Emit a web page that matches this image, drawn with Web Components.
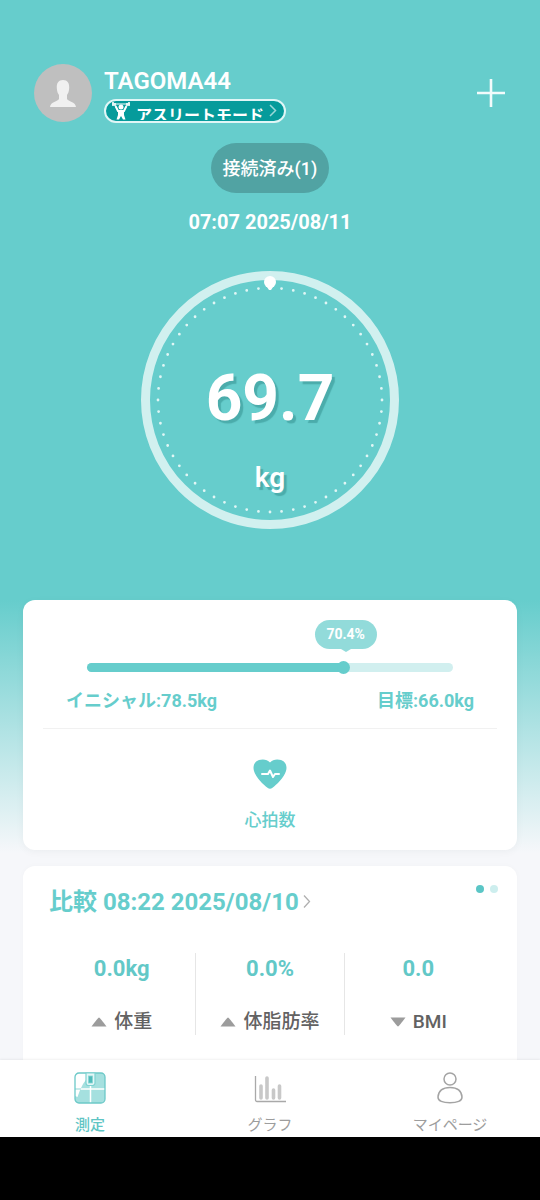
<!DOCTYPE html>
<html lang="ja">
<head>
<meta charset="utf-8">
<meta name="viewport" content="width=device-width, initial-scale=1">
<title>測定</title>
<style>
  :root { --teal: #66cdcc; --pale: #d1efef; --page: #f6f7fa; --grey: #9d9d9d; }
  html, body { height: 100%; }
  body { margin: 0; background: #000; color: #fff; font-family: Roboto, "Noto Sans CJK JP", sans-serif; }
</style>
</head>
<body>
<app-screen>
  <user-header name="TAGOMA44" mode="アスリートモード"></user-header>
  <weight-hero status="接続済み(1)" time="07:07 2025/08/11" value="69.7" unit="kg"></weight-hero>
  <goal-card percent="70.4" start="イニシャル:78.5kg" target="目標:66.0kg"></goal-card>
  <compare-card heading="比較 08:22 2025/08/10">
    <metric-item value="0.0kg" trend="up">体重</metric-item>
    <metric-item value="0.0%" trend="up">体脂肪率</metric-item>
    <metric-item value="0.0" trend="down">BMI</metric-item>
  </compare-card>
  <tab-bar slot="tabs">
    <tab-item active>
      <svg slot="icon" width="32" height="32" viewBox="0 0 32 32" aria-hidden="true">
        <rect x="1" y="1" width="30" height="30" rx="4" fill="#a5e0df"/>
        <path d="M1 17V5a4 4 0 0 1 4-4h13Q8 10 3.500 25L1 24z" fill="#fff"/>
        <path d="M5 17h26M16.500 14v17" stroke="#fff" stroke-width="1.500"/>
        <path d="M1 17h6" stroke="#8fd7d6"/>
        <rect x="1" y="1" width="30" height="30" rx="4" fill="none" stroke="#6cc9c8" stroke-width="1.300"/>
        <path d="M12 1v10a2.500 2.500 0 0 0 2.500 2.500h4A2.500 2.500 0 0 0 21 11V1z" fill="#e4f7f7" stroke="#7fd2d1" stroke-width="1.200"/>
        <rect x="14.500" y="4" width="4" height="7" fill="#4fbcbb" stroke="#8ad5d4" stroke-width=".8"/>
      </svg>測定</tab-item>
    <tab-item>
      <svg slot="icon" width="32" height="32" viewBox="0 0 32 32" aria-hidden="true">
        <path d="M1.500 4v24a1.500 1.500 0 0 0 1.500 1.500h29" fill="none" stroke="#a9a9a9" stroke-width="1.300"/>
        <path d="M7 26V14M13 26V6M19.500 26V18M25.500 26V14" stroke="#c8c8c8" stroke-width="3.600" stroke-linecap="round"/>
      </svg>グラフ</tab-item>
    <tab-item>
      <svg slot="icon" width="32" height="32" viewBox="0 0 32 32" fill="none" stroke="#a4a4a4" stroke-width="1.500" aria-hidden="true">
        <circle cx="16" cy="7" r="6"/>
        <path d="M16 15.500c7 0 11.500 3 12 9.500.2 4-5 5.800-12 5.800S3.800 29 4 25c.5-6.500 5-9.500 12-9.500z"/>
      </svg>マイページ</tab-item>
  </tab-bar>
</app-screen>

<script>
const define = (name, render) => customElements.define(name, class extends HTMLElement {
  connectedCallback() {
    if (this.shadowRoot) return;
    this.attachShadow({ mode: 'open' }).innerHTML = render(k => this.getAttribute(k));
  }
});

define('app-screen', () => `
  <style>
    :host { display: flex; flex-direction: column; height: 100%; box-sizing: border-box; padding-bottom: 63px; }
    main { flex: 1; min-height: 0; overflow: hidden; background: var(--page); }
  </style>
  <main><slot></slot></main><slot name="tabs"></slot>`);

define('user-header', a => `
  <style>
    :host { display: flex; align-items: center; gap: 12px; padding: 63px 34px 0; background: var(--teal); }
    .avatar { display: block; flex: none; }
    .who { flex: 1; display: flex; flex-direction: column; align-items: flex-start; gap: 4px; padding-top: 4px; }
    h1 { margin: 0; font-size: 24px; line-height: 28px; font-weight: 600; }
    button { border: 0; padding: 0; background: none; color: inherit; font: inherit; }
    .mode { display: flex; align-items: flex-start; height: 24px; width: 182px; box-sizing: border-box; overflow: hidden;
      padding: 0 7px 0 5px; border: 2px solid #e0f6f6; border-radius: 12px; background: #069b9b; }
    .mode span { flex: 1; height: 19px; overflow: hidden; text-align: center; font-size: 16px; line-height: 29px; font-weight: 700; white-space: nowrap; }
    .mode svg { flex: none; display: block; }
    .add svg { display: block; }
  </style>
  <svg class="avatar" width="58" height="58" viewBox="0 0 58 58" role="img" aria-label="avatar">
    <circle cx="29" cy="29" r="29" fill="#bfbfbf"/>
    <path d="M29 16c4.500 0 6.500 3 6.200 8-.2 4-1.200 5.500-2.200 7v4c1 2.500 8.500 2.500 9 8H16c.5-5.500 8-5.500 9-8v-4c-1-1.500-2-3-2.200-7-.3-5 1.700-8 6.200-8z" fill="#f0f0f0"/>
  </svg>
  <div class="who">
    <h1>${a('name')}</h1>
    <button class="mode" type="button">
      <svg width="20" height="20" viewBox="0 0 20 20" fill="none" stroke="#fff" aria-hidden="true">
        <path d="M1 3h18" stroke-width="1"/>
        <path d="M2 1v4M4 2v3M16 2v3M18 1v4" stroke-width="1.600"/>
        <circle cx="10" cy="6" r="2.500" fill="#fff" stroke="none"/>
        <path d="M4.500 5l2.500 5h6l2.500-5" stroke-width="2"/>
        <path d="M7 9h6v5l1.500 4.500h-2.500L10 15l-2 3.500H5.500L7 14z" fill="#fff" stroke="none"/>
      </svg>
      <span>${a('mode')}</span>
      <svg width="8" height="20" viewBox="0 0 8 20" fill="none" stroke="#9ad8d8" stroke-width="1.500" aria-hidden="true"><path d="M1 4l5.500 5.500L1 15"/></svg>
    </button>
  </div>
  <button class="add" type="button" aria-label="追加">
    <svg width="30" height="30" viewBox="0 0 30 30" stroke="#f2fbfb" stroke-width="2.600"><path d="M15 1v28M1 15h28"/></svg>
  </button>`);

define('weight-hero', a => `
  <style>
    :host { display: flex; flex-direction: column; align-items: center; padding: 20px 0 71px; background: var(--teal); }
    button { height: 50px; padding: 2px 12px 0; border: 0; border-radius: 25px; background: #51a3a3; color: #fff; font: 500 18px/26px Roboto, "Noto Sans CJK JP", sans-serif; }
    time { margin-top: 17px; font-size: 20px; line-height: 24px; font-weight: 700; }
    .gauge { display: grid; margin-top: 37px; }
    .gauge > * { grid-area: 1 / 1; }
    .read { display: flex; flex-direction: column; align-items: center; padding-top: 88px; text-shadow: 3px 3px 1px #4bacab; }
    .num { font-size: 64px; line-height: 80px; font-weight: 700; }
    .unit { font-size: 28px; line-height: 36px; margin-top: 21px; font-weight: 600; }
  </style>
  <button type="button">${a('status')}</button>
  <time>${a('time')}</time>
  <div class="gauge">
    <svg width="258" height="258" viewBox="0 0 258 258" fill="none" aria-hidden="true">
      <circle cx="129" cy="129" r="124.500" stroke="#d1f0ef" stroke-width="9"/>
      <circle cx="129" cy="129" r="112" stroke="#e0f6f5" stroke-width="2.800" stroke-linecap="round" pathLength="60" stroke-dasharray="0 1" transform="rotate(-90 129 129)"/>
      <circle cx="129" cy="11" r="6" fill="#fff"/>
      <path d="M126 16h6l-2 3h-2z" fill="#fff"/>
    </svg>
    <div class="read"><span class="num">${a('value')}</span><span class="unit">${a('unit')}</span></div>
  </div>`);

define('goal-card', a => `
  <style>
    :host { display: block; padding: 0 23px 8px; background: linear-gradient(var(--teal), var(--page) 98%); color: var(--teal); }
    section { padding: 20px 20px 18px; border-radius: 12px; background: #fff; box-shadow: 0 2px 8px #0000000a; }
    .goal { padding: 0 23px 15px; border-bottom: 1px solid #f1f1f1; }
    .scale { padding: 0 21px; }
    .bar { position: relative; margin-top: 43px; height: 9px; border-radius: 5px; background: var(--pale); }
    .fill { height: 9px; border-radius: 5px; background: var(--teal); width: ${a('percent')}%; }
    .knob { position: absolute; left: ${a('percent')}%; top: -2px; width: 13px; height: 13px; margin-left: -8px; border-radius: 50%; background: var(--teal); }
    .tip { position: absolute; bottom: 23px; left: ${a('percent')}%; transform: translateX(-50%); margin-left: 1px; width: 62px; border-radius: 15px;
      text-align: center; color: #fff; background: #92dbda; font-size: 14px; line-height: 29px; font-weight: 700; }
    .tip::after { content: ""; position: absolute; left: 26px; top: 100%; border: solid transparent; border-width: 3px 5px 0; border-top-color: #92dbda; }
    .ends { display: flex; justify-content: space-between; margin-top: 17px; font-size: 18px; line-height: 24px; font-weight: 700; }
    .heart { display: flex; flex-direction: column; align-items: center; gap: 19px; width: 100%; padding: 30px 0 0; border: 0; background: none; color: inherit;
      font: 500 17px/24px Roboto, "Noto Sans CJK JP", sans-serif; }
  </style>
  <section>
    <div class="goal">
      <div class="scale"><div class="bar" role="progressbar" aria-valuenow="${a('percent')}">
        <div class="fill"></div><div class="knob"></div><div class="tip">${a('percent')}%</div>
      </div></div>
      <div class="ends"><span>${a('start')}</span><span>${a('target')}</span></div>
    </div>
    <button class="heart" type="button">
      <svg width="34" height="30" viewBox="0 0 34 30" aria-hidden="true">
        <path d="M17 3.500C19.500 0 25 0 28 1c4.500 1.500 6.500 6 5 11-2 7-9.500 13.500-13.500 16.800a4 4 0 0 1-5 0C10.500 25.500 3 19 1 12-.5 7 1.500 2.500 6 1c3-1 8.500-1 11 2.500z" fill="#66cdcc"/>
        <path d="M9 15h6l2-3.500 3 6.500 2-3h4" fill="none" stroke="#fff" stroke-width="2" stroke-linecap="round" stroke-linejoin="round"/>
      </svg>
      <span>心拍数</span>
    </button>
  </section>`);

define('compare-card', a => `
  <style>
    :host { display: block; padding: 8px 23px 0; }
    section { padding: 19px 19px 40px 25px; border-radius: 12px; background: #fff; box-shadow: 0 0 6px #00000006; }
    header { display: flex; justify-content: space-between; align-items: flex-start; color: var(--teal); }
    a { display: flex; align-items: center; gap: 4px; color: inherit; text-decoration: none; }
    h2 { margin: 0; padding-left: 1px; font-size: 24px; line-height: 34px; font-weight: 700; }
    .dots { display: flex; gap: 6px; }
    .dots i { width: 8px; height: 8px; border-radius: 50%; background: #5bc6c6; }
    .dots i + i { background: #cdeeee; }
    .row { display: grid; grid-template-columns: repeat(3, 1fr); margin: 34px 5px 0 0; }
  </style>
  <section>
    <header>
      <a href="#compare"><h2>${a('heading')}</h2>
        <svg width="8" height="16" viewBox="0 0 8 16" fill="none" stroke="#b0b0b0" stroke-width="1.300" aria-hidden="true"><path d="M1 1.500l5.500 6L1 13.500"/></svg></a>
      <div class="dots"><i></i><i></i></div>
    </header>
    <div class="row"><slot></slot></div>
  </section>`);

define('metric-item', a => `
  <style>
    :host { display: flex; flex-direction: column; align-items: center; justify-content: space-between; height: 82px; box-sizing: border-box; border-right: 1px solid #e6e6e6; }
    :host(:last-child) { border-right-color: transparent; }
    b { color: #62c8c7; font-size: 22px; line-height: 32px; font-weight: 700; }
    span { display: flex; align-items: center; gap: 7px; color: #626262; font-size: 19px; line-height: 26px; font-weight: 500; }
  </style>
  <b>${a('value')}</b>
  <span><svg width="16" height="10" viewBox="0 0 16 10" fill="#9c9c9c" aria-hidden="true"><path d="${a('trend') === 'up' ? 'M8 .5Q8.800.500 15.500 9.500H.5Q7.200.500 8 .5z' : 'M8 9.500Q8.800 9.500 15.500.500H.5Q7.200 9.500 8 9.500z'}"/></svg><slot></slot></span>`);

define('tab-bar', () => `
  <style>
    :host { display: block; background: #fff; box-shadow: 0 -1px 2px #0000000f; z-index: 1; }
    nav { display: grid; grid-template-columns: repeat(3, 1fr); }
  </style>
  <nav><slot></slot></nav>`);

define('tab-item', () => `
  <style>
    :host { display: block; color: var(--grey); font-weight: 400; }
    :host([active]) { color: #5fc5c4; font-weight: 500; }
    a { display: flex; flex-direction: column; align-items: center; gap: 9px; padding: 12px 0 0; color: inherit; text-decoration: none; font-size: 15px; line-height: 24px; }
  </style>
  <a href="#tab"><slot name="icon"></slot><span><slot></slot></span></a>`);
</script>
</body>
</html>
